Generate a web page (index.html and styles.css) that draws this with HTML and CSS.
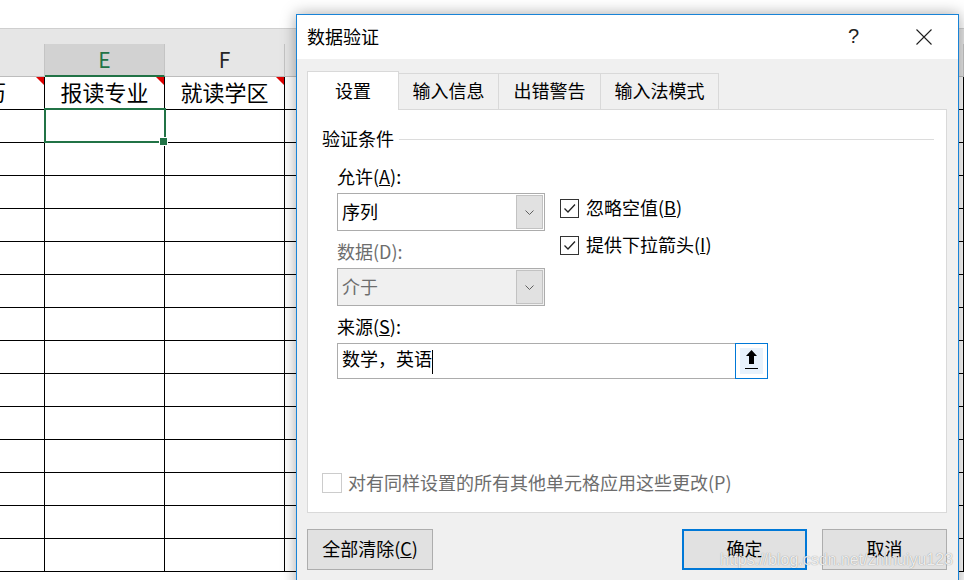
FILE: index.html
```html
<!DOCTYPE html>
<html>
<head>
  <meta charset="utf-8">
  <title>数据验证</title>
  <link rel="stylesheet" href="styles.css">
</head>
<body>

  <section class="sheet">
    <div class="sheet-top"></div>
    <div class="sheet-strip"></div>
    <div class="sheet-row">
      <div class="col-head"></div>
      <div class="col-head current">E</div>
      <div class="col-head">F</div>
      <div class="col-head"></div>
    </div>
    <div class="sheet-row">
      <div class="cell note">最高学历</div>
      <div class="cell note">报读专业</div>
      <div class="cell note">就读学区</div>
      <div class="cell"></div>
    </div>
    <div class="sheet-row">
      <div class="cell"></div><div class="cell selected"></div><div class="cell"></div><div class="cell"></div>
    </div>
    <div class="sheet-row"><div class="cell"></div><div class="cell"></div><div class="cell"></div><div class="cell"></div></div>
    <div class="sheet-row"><div class="cell"></div><div class="cell"></div><div class="cell"></div><div class="cell"></div></div>
    <div class="sheet-row"><div class="cell"></div><div class="cell"></div><div class="cell"></div><div class="cell"></div></div>
    <div class="sheet-row"><div class="cell"></div><div class="cell"></div><div class="cell"></div><div class="cell"></div></div>
    <div class="sheet-row"><div class="cell"></div><div class="cell"></div><div class="cell"></div><div class="cell"></div></div>
    <div class="sheet-row"><div class="cell"></div><div class="cell"></div><div class="cell"></div><div class="cell"></div></div>
    <div class="sheet-row"><div class="cell"></div><div class="cell"></div><div class="cell"></div><div class="cell"></div></div>
    <div class="sheet-row"><div class="cell"></div><div class="cell"></div><div class="cell"></div><div class="cell"></div></div>
    <div class="sheet-row"><div class="cell"></div><div class="cell"></div><div class="cell"></div><div class="cell"></div></div>
    <div class="sheet-row"><div class="cell"></div><div class="cell"></div><div class="cell"></div><div class="cell"></div></div>
    <div class="sheet-row"><div class="cell"></div><div class="cell"></div><div class="cell"></div><div class="cell"></div></div>
    <div class="sheet-row"><div class="cell"></div><div class="cell"></div><div class="cell"></div><div class="cell"></div></div>
    <div class="sheet-row"><div class="cell"></div><div class="cell"></div><div class="cell"></div><div class="cell"></div></div>
  </section>

  <div class="dialog">
    <div class="dialog-title">
      <span class="title-text">数据验证</span>
      <span class="help">?</span>
      <svg class="close" width="16" height="16" viewBox="0 0 16 16">
        <path d="M0.5 0.5 L15.5 15.5 M15.5 0.5 L0.5 15.5" stroke="#1e1e1e" stroke-width="1.1" fill="none"/>
      </svg>
    </div>

    <div class="dialog-body">
      <ul class="tabs">
        <li class="tab active">设置</li>
        <li class="tab tab-2">输入信息</li>
        <li class="tab tab-3">出错警告</li>
        <li class="tab tab-4">输入法模式</li>
      </ul>

      <div class="panel">
        <div class="group-title">验证条件</div>

        <div class="form">
          <div class="form-top">
            <div class="left-col">
              <div class="label">允许(<u>A</u>):</div>
              <div class="combo">
                <span class="combo-value">序列</span>
                <span class="combo-btn">
                  <svg width="9" height="5" viewBox="0 0 9 5"><path d="M0.5 0.5 L4.5 4.5 L8.5 0.5" stroke="#5f5f5f" fill="none"/></svg>
                </span>
              </div>
              <div class="label disabled">数据(D):</div>
              <div class="combo disabled">
                <span class="combo-value">介于</span>
                <span class="combo-btn">
                  <svg width="9" height="5" viewBox="0 0 9 5"><path d="M0.5 0.5 L4.5 4.5 L8.5 0.5" stroke="#5f5f5f" fill="none"/></svg>
                </span>
              </div>
            </div>

            <div class="right-col">
              <label class="check">
                <span class="box">
                  <svg width="17" height="17" viewBox="0 0 17 17"><path d="M3.5 8.5 L7 12 L14 4.5" stroke="#222" stroke-width="1.3" fill="none"/></svg>
                </span>
                <span class="check-text">忽略空值(<u>B</u>)</span>
              </label>
              <label class="check">
                <span class="box">
                  <svg width="17" height="17" viewBox="0 0 17 17"><path d="M3.5 8.5 L7 12 L14 4.5" stroke="#222" stroke-width="1.3" fill="none"/></svg>
                </span>
                <span class="check-text">提供下拉箭头(<u>I</u>)</span>
              </label>
            </div>
          </div>

          <div class="label">来源(<u>S</u>):</div>
          <div class="source">
            <span class="source-text">数学，英语<span class="caret"></span></span>
            <span class="pick-btn">
              <span class="pick-face">
                <svg width="23" height="24" viewBox="0 0 23 24">
                  <path d="M11.5 1 L17 7 L14 7 L14 15 L9 15 L9 7 L6 7 Z" fill="#000"/>
                  <path d="M5 19.5 L18 19.5" stroke="#000" stroke-width="1"/>
                </svg>
              </span>
            </span>
          </div>
        </div>

        <label class="check apply-all">
          <span class="box"></span>
          <span class="check-text">对有同样设置的所有其他单元格应用这些更改(P)</span>
        </label>
      </div>

      <div class="actions">
        <button class="btn">全部清除(<u>C</u>)</button>
        <button class="btn primary">确定</button>
        <button class="btn cancel">取消</button>
      </div>
    </div>
  </div>

  <div class="watermark">https://blog.csdn.net/zhihuiyu123</div>

</body>
</html>
```

FILE: styles.css
```css
html {
  font-family: "Noto Sans CJK SC", sans-serif;
}

* {
  box-sizing: border-box;
}

body {
  margin: 0;
  width: 964px;
  height: 580px;
  overflow: hidden;
  position: relative;
  background: #fff;
  color: #000;
}

/* spreadsheet behind the dialog */
.sheet {
  display: flex;
  flex-direction: column;
}

.sheet-top {
  height: 28px;
}

.sheet-strip {
  height: 16px;
  background: #e6e6e6;
  border-top: 1px solid #cfcfcf;
}

.sheet-row {
  display: grid;
  grid-template-columns: 165px 120px 120px 1fr;
  margin-left: -120px; /* column D is scrolled partly out of view */
  height: 33px;
  flex-shrink: 0;
}

.col-head {
  background: #e6e6e6;
  border-right: 1px solid #c4c4c4;
  border-bottom: 1px solid #bdbdbd;
  font-size: 21px;
  line-height: 31px;
  text-align: center;
  color: #262626;
}

.col-head.current {
  background: #d2d2d2;
  color: #217346;
  border-bottom: 2px solid #217346;
}

.cell {
  position: relative;
  border-right: 1px solid #000;
  border-bottom: 1px solid #000;
  font-size: 22px;
  line-height: 28px;
  text-align: center;
  white-space: nowrap;
}

.cell.note::after {
  content: "";
  position: absolute;
  top: 0;
  right: 0;
  border-top: 8px solid #e00000;
  border-left: 8px solid transparent;
}

.cell.selected::after {
  content: "";
  position: absolute;
  top: -2px;
  left: -1px;
  right: -2px;
  bottom: -1px;
  border: 2px solid #217346;
}

.cell.selected::before {
  content: "";
  position: absolute;
  right: -4px;
  bottom: -4px;
  width: 7px;
  height: 7px;
  background: #217346;
  border: 1px solid #fff;
  z-index: 1;
}

/* dialog window */
.dialog {
  position: absolute;
  left: 296px;
  top: 14px;
  width: 663px;
  height: 580px;
  border: 1px solid #1883d7;
  background: #f0f0f0;
  box-shadow: 0 0 14px rgba(0, 0, 0, 0.35);
  display: flex;
  flex-direction: column;
}

.dialog-title {
  height: 44px;
  background: #fff;
  display: flex;
  align-items: center;
  padding-left: 10px;
  padding-bottom: 2px;
  font-size: 18px;
  flex-shrink: 0;
}

.title-text {
  flex: 1;
}

.help {
  font-family: "Liberation Sans", sans-serif;
  font-size: 20px;
  color: #222;
  margin-right: 57px;
}

.close {
  margin-right: 26px;
  margin-top: 2px;
}

.dialog-body {
  padding: 12px 11px 0 10px;
}

.tabs {
  list-style: none;
  margin: 0;
  padding: 0;
  display: flex;
  align-items: flex-end;
}

.tab {
  height: 36px;
  border: 1px solid #d9d9d9;
  border-bottom: none;
  margin-left: -1px;
  font-size: 18px;
  line-height: 33px;
  text-align: center;
}

.tab.active {
  width: 92px;
  height: 39px;
  margin-left: 0;
  margin-bottom: -1px;
  background: #fff;
  position: relative;
  z-index: 1;
  line-height: 36px;
}

.tab-2 { width: 101px; }
.tab-3 { width: 103px; }
.tab-4 { width: 119px; }

.panel {
  width: 640px;
  height: 404px;
  background: #fff;
  border: 1px solid #d9d9d9;
  display: flex;
  flex-direction: column;
  padding: 0 12px 19px 14px;
  font-size: 18px;
}

.group-title {
  display: flex;
  align-items: center;
  margin-top: 17px;
  line-height: 22px;
  padding-bottom: 2px;
}

.group-title::after {
  content: "";
  flex: 1;
  height: 1px;
  background: #dcdcdc;
  margin-left: 5px;
  margin-top: 2px;
}

.form {
  padding-left: 15px;
  margin-top: 14px;
}

.form-top {
  display: flex;
}

.left-col {
  width: 208px;
}

.label {
  line-height: 22px;
  margin-bottom: 6px;
}

.label.disabled {
  color: #6d6d6d;
}

.combo {
  height: 38px;
  border: 1px solid #acacac;
  background: #fff;
  display: flex;
  margin-bottom: 9px;
}

.combo.disabled {
  background: #f0f0f0;
  color: #6d6d6d;
}

.combo-value {
  flex: 1;
  padding-left: 4px;
  line-height: 34px;
}

.combo-btn {
  width: 27px;
  margin: 1px;
  border: 1px solid #c2c2c2;
  background: #e1e1e1;
  display: flex;
  align-items: center;
  justify-content: center;
}

.right-col {
  margin-left: 15px;
  padding-top: 34px;
}

.check {
  display: flex;
  align-items: center;
  height: 19px;
  margin-bottom: 18px;
  line-height: 24px;
}

.check-text {
  margin-top: -3px;
}

.box {
  width: 19px;
  height: 19px;
  border: 1px solid #333;
  background: #fff;
  margin-right: 7px;
  flex-shrink: 0;
}

.box svg {
  display: block;
}

.source {
  width: 431px;
  height: 36px;
  border: 1px solid #acacac;
  display: flex;
}

.source-text {
  flex: 1;
  padding-left: 4px;
  line-height: 29px;
}

.caret {
  display: inline-block;
  width: 1px;
  height: 24px;
  background: #000;
  vertical-align: middle;
  margin-top: 1px;
}

.pick-btn {
  width: 33px;
  margin: -1px -1px -1px 0;
  border: 1px solid #0078d7;
  background: #fff;
  padding: 4px;
}

.pick-face {
  display: flex;
  height: 100%;
  align-items: center;
  justify-content: center;
  background: #e8f2fc;
}

.apply-all {
  margin-top: auto;
  margin-bottom: 0;
  height: 20px;
  color: #6d6d6d;
}

.apply-all .box {
  width: 20px;
  height: 20px;
  border-color: #cccccc;
  margin-right: 6px;
}

.actions {
  display: flex;
  margin-top: 16px;
}

.btn {
  width: 126px;
  height: 41px;
  background: #e1e1e1;
  border: 1px solid #adadad;
  font-family: inherit;
  font-size: 18px;
  color: #000;
  padding: 0 0 3px;
}

.btn.primary {
  width: 125px;
  margin-left: auto;
  border: 2px solid #0078d7;
}

.btn.cancel {
  width: 125px;
  margin-left: 15px;
}

.watermark {
  position: absolute;
  left: 720px;
  top: 551px;
  font-family: "Liberation Sans", sans-serif;
  font-size: 16px;
  color: rgba(255, 255, 255, 0.85);
  text-shadow: 0 0 1px rgba(0, 0, 0, 0.45);
  z-index: 2;
}
```
